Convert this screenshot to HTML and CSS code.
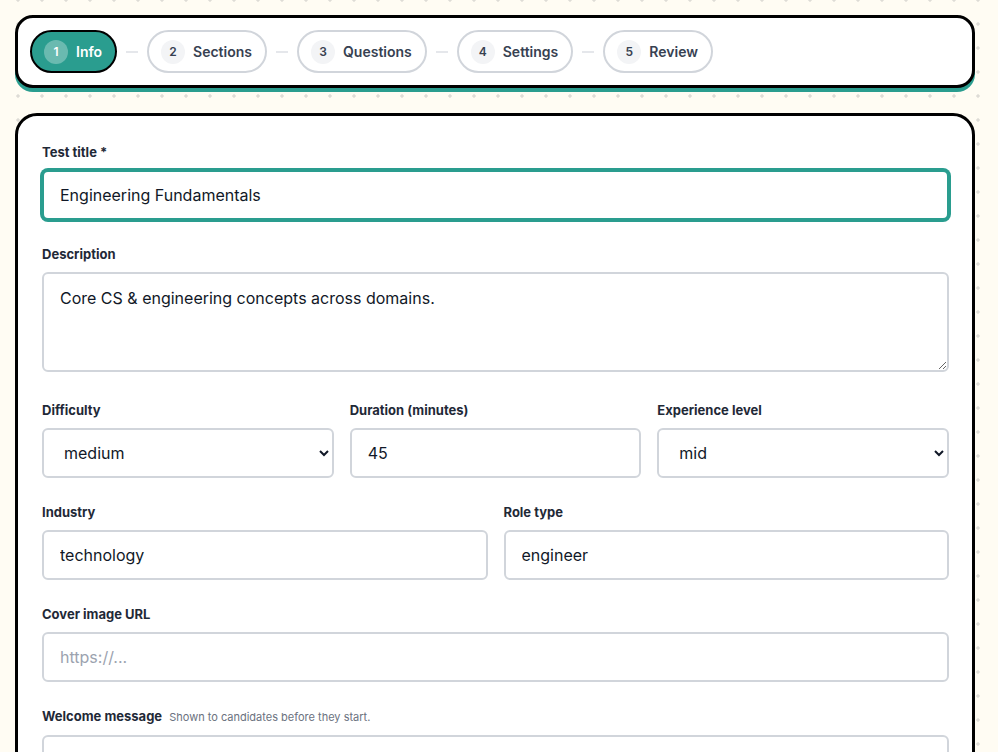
FILE: index.html
```html
<!DOCTYPE html>
<html lang="en">
<head>
<meta charset="utf-8">
<title>Create test</title>
<link rel="stylesheet" href="styles.css">
</head>
<body>
<div class="page">
  <nav class="stepper">
    <div class="step active"><span class="num">1</span><span class="lbl">Info</span></div>
    <span class="dash"></span>
    <div class="step"><span class="num">2</span><span class="lbl">Sections</span></div>
    <span class="dash"></span>
    <div class="step"><span class="num">3</span><span class="lbl">Questions</span></div>
    <span class="dash"></span>
    <div class="step"><span class="num">4</span><span class="lbl">Settings</span></div>
    <span class="dash"></span>
    <div class="step"><span class="num">5</span><span class="lbl">Review</span></div>
  </nav>

  <main class="card">
    <div class="field">
      <label class="label" for="title">Test title *</label>
      <input id="title" class="control focused" type="text" value="Engineering Fundamentals ">
    </div>
    <div class="field">
      <label class="label" for="desc">Description</label>
      <textarea id="desc" class="control area">Core CS &amp; engineering concepts across domains.</textarea>
    </div>
    <div class="row three">
      <div class="field">
        <label class="label" for="diff">Difficulty</label>
        <select id="diff" class="control sel"><option>easy</option><option selected>medium</option><option>hard</option></select>
      </div>
      <div class="field">
        <label class="label" for="dur">Duration (minutes)</label>
        <input id="dur" class="control" type="text" value="45">
      </div>
      <div class="field">
        <label class="label" for="exp">Experience level</label>
        <select id="exp" class="control sel"><option>junior</option><option selected>mid</option><option>senior</option></select>
      </div>
    </div>
    <div class="row two">
      <div class="field">
        <label class="label" for="ind">Industry</label>
        <input id="ind" class="control" type="text" value="technology">
      </div>
      <div class="field">
        <label class="label" for="role">Role type</label>
        <input id="role" class="control" type="text" value="engineer">
      </div>
    </div>
    <div class="field">
      <label class="label" for="cover">Cover image URL</label>
      <input id="cover" class="control" type="text" placeholder="https://...">
    </div>
    <div class="field">
      <label class="label" for="welcome">Welcome message <span class="hint">Shown to candidates before they start.</span></label>
      <textarea id="welcome" class="control area"></textarea>
    </div>
  </main>
</div>
<script src="app.js"></script>
</body>
</html>
```

FILE: styles.css
```css
* { box-sizing: border-box; }

html, body {
  margin: 0;
  padding: 0;
}

body {
  background-color: #fffcf3;
  background-image: radial-gradient(circle, #dedcd6 1.4px, transparent 1.9px);
  background-size: 24px 24px;
  background-position: 6px -12px;
  font-family: Inter, "Noto Sans", sans-serif;
  color: #1f2937;
}

.page {
  padding: 15px 23px 0 15px;
}

.stepper {
  display: flex;
  align-items: center;
  gap: 9px;
  background: #fff;
  border: 3px solid #000;
  border-radius: 18px;
  box-shadow: 0 4px 0 0 #2a9d8f;
  padding: 12px;
}

.step {
  display: flex;
  align-items: center;
  gap: 8px;
  height: 43px;
  padding: 0 13px 0 12px;
  border: 2px solid #d1d5db;
  border-radius: 999px;
  background: #fff;
  color: #374151;
  font-size: 14px;
  font-weight: 600;
}

.step .num {
  display: flex;
  align-items: center;
  justify-content: center;
  width: 24px;
  height: 24px;
  border-radius: 50%;
  background: #f3f4f6;
  font-size: 12px;
  font-weight: 600;
  color: #374151;
}

.step.active {
  background: #2a9d8f;
  border-color: #000;
  color: #fff;
}

.step.active .num {
  background: rgba(255, 255, 255, 0.3);
  color: #fff;
}

.dash {
  width: 12px;
  height: 2px;
  background: #e5e7eb;
}

.card {
  margin-top: 25px;
  background: #fff;
  border: 3px solid #000;
  border-radius: 22px;
  padding: 24px 23px 40px 24px;
  display: flex;
  flex-direction: column;
  gap: 22px;
}

.field {
  display: flex;
  flex-direction: column;
  min-width: 0;
}

.label {
  font-size: 13px;
  font-weight: 700;
  line-height: 24px;
  margin-bottom: 6px;
  color: #1f2937;
}

.hint {
  font-size: 11px;
  font-weight: 400;
  color: #6b7280;
  margin-left: 4px;
}

.control {
  width: 100%;
  height: 50px;
  border: 2px solid #d1d5db;
  border-radius: 6px;
  padding: 0 16px;
  font-family: inherit;
  font-size: 16px;
  color: #111827;
  background: #fff;
  outline: none;
  caret-color: #111827;
}

.control::placeholder {
  color: #9ca3af;
}

.control.focused {
  border-color: #2a9d8f;
  box-shadow: 0 0 0 2px #2a9d8f;
}

.area {
  height: 100px;
  padding: 12px 16px;
  line-height: 24px;
  resize: vertical;
  margin-bottom: 4px;
}

.sel {
  padding: 0 12px 0 16px;
}

.row {
  display: grid;
  gap: 16px;
}

.row.three { grid-template-columns: repeat(3, 1fr); }
.row.two { grid-template-columns: repeat(2, 1fr); }
```

FILE: app.js
```js
var t = document.getElementById('title');
t.focus();
t.setSelectionRange(t.value.length, t.value.length);
```
